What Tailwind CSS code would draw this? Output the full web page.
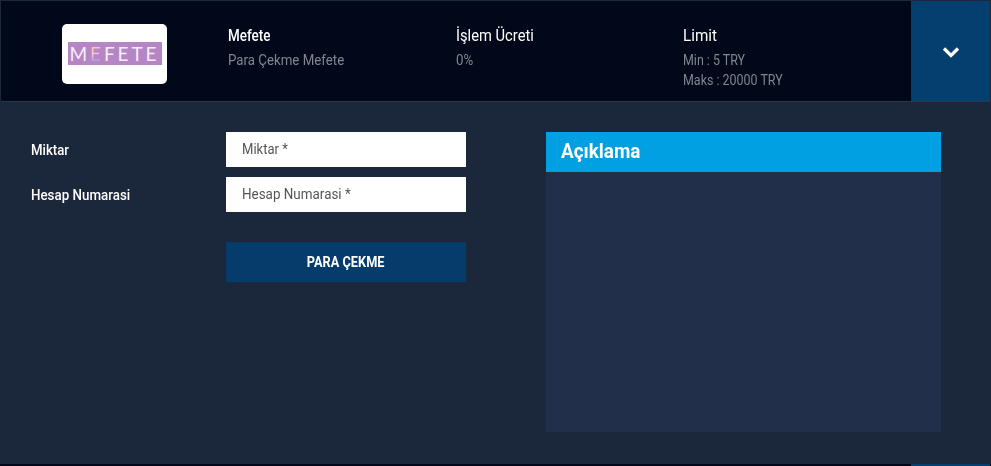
<!DOCTYPE html>
<html lang="tr">
<head>
  <meta charset="UTF-8">
  <title>Para Çekme</title>
  <script src="https://cdn.jsdelivr.net/npm/@tailwindcss/browser@4"></script>
</head>
<body class="bg-[#000819] h-[466px] overflow-hidden font-['Roboto',sans-serif]">
  <div class="h-[464px] border border-b-0 border-[#1b273b]">
    <!-- header row -->
    <div class="flex h-[101px] border-b border-[#2b3648] bg-[#000819]">
      <div class="w-[227px] pl-[61px] pt-[23px]">
        <div class="w-[105px] h-[60px] bg-white rounded-[5px] flex items-center justify-center pb-[1px]">
          <div class="w-[94px] h-[23px] bg-[#b585c4] flex items-center justify-center text-[#f6eef8] text-[19px] leading-none tracking-[2.9px] font-['Lato',sans-serif] font-normal">M<span class="bg-linear-to-b from-[#ffc48f] via-[#ffc0d8] to-[#8f9bf0] bg-clip-text text-transparent">E</span>FETE</div>
        </div>
      </div>
      <div class="w-[228px] pt-[25px]">
        <p class="text-white text-[16px] leading-5 font-medium origin-left scale-x-[.84]">Mefete</p>
        <p class="text-[#80858f] text-[15px] leading-5 mt-[4px] origin-left scale-x-[.885]">Para Çekme Mefete</p>
      </div>
      <div class="w-[227px] pt-[25px]">
        <p class="text-white text-[16px] leading-5 origin-left scale-x-[.92]">İşlem Ücreti</p>
        <p class="text-[#80858f] text-[15px] leading-5 mt-[4px] origin-left scale-x-[.885]">0%</p>
      </div>
      <div class="w-[228px] pt-[25px]">
        <p class="text-white text-[16px] leading-5 origin-left scale-x-[.95]">Limit</p>
        <p class="text-[#80858f] text-[15px] leading-5 mt-[4px] origin-left scale-x-[.83]">Min : 5 TRY</p>
        <p class="text-[#80858f] text-[15px] leading-5 origin-left scale-x-[.83]">Maks : 20000 TRY</p>
      </div>
      <div class="w-[79px] bg-[#053f70] flex justify-center pt-[45px]">
        <svg class="w-[18px] h-[12px]" viewBox="0 0 18 12" fill="none" stroke="white" stroke-width="3.2">
          <path d="M2 2.5 L9 9.5 L16 2.5"/>
        </svg>
      </div>
    </div>
    <!-- body -->
    <div class="h-[362px] bg-[#1b273b] flex pt-[30px] pl-[30px] pr-[49px]">
      <div class="w-[515px]">
        <div class="flex items-center h-[35px] mb-[10px]">
          <label class="w-[195px] pt-[1px] text-white text-[15px] font-medium origin-left scale-x-[.88]">Miktar</label>
          <div class="w-[240px] h-[35px] bg-white flex items-center pl-4 text-[#555555] text-[15px]"><span class="origin-left scale-x-[.87]">Miktar *</span></div>
        </div>
        <div class="flex items-center h-[35px]">
          <label class="w-[195px] pt-[1px] text-white text-[15px] font-medium origin-left scale-x-[.89]">Hesap Numarasi</label>
          <div class="w-[240px] h-[35px] bg-white flex items-center pl-4 text-[#555555] text-[15px]"><span class="origin-left scale-x-[.895]">Hesap Numarasi *</span></div>
        </div>
        <button class="block ml-[195px] mt-[30px] w-[240px] h-[40px] bg-[#053c6c] text-white text-[15px] font-bold"><span class="inline-block scale-x-[.85]">PARA ÇEKME</span></button>
      </div>
      <div class="w-[395px] h-[300px] bg-[#212f4b]">
        <div class="h-[40px] bg-[#00a0e3] pl-[15px] flex items-center text-white text-[21px] font-bold"><span class="origin-left scale-x-[.9]">Açıklama</span></div>
      </div>
    </div>
  </div>
  <div class="h-[2px] flex justify-end pr-[1px]">
    <div class="w-[79px] bg-[#053f70]"></div>
  </div>
</body>
</html>
